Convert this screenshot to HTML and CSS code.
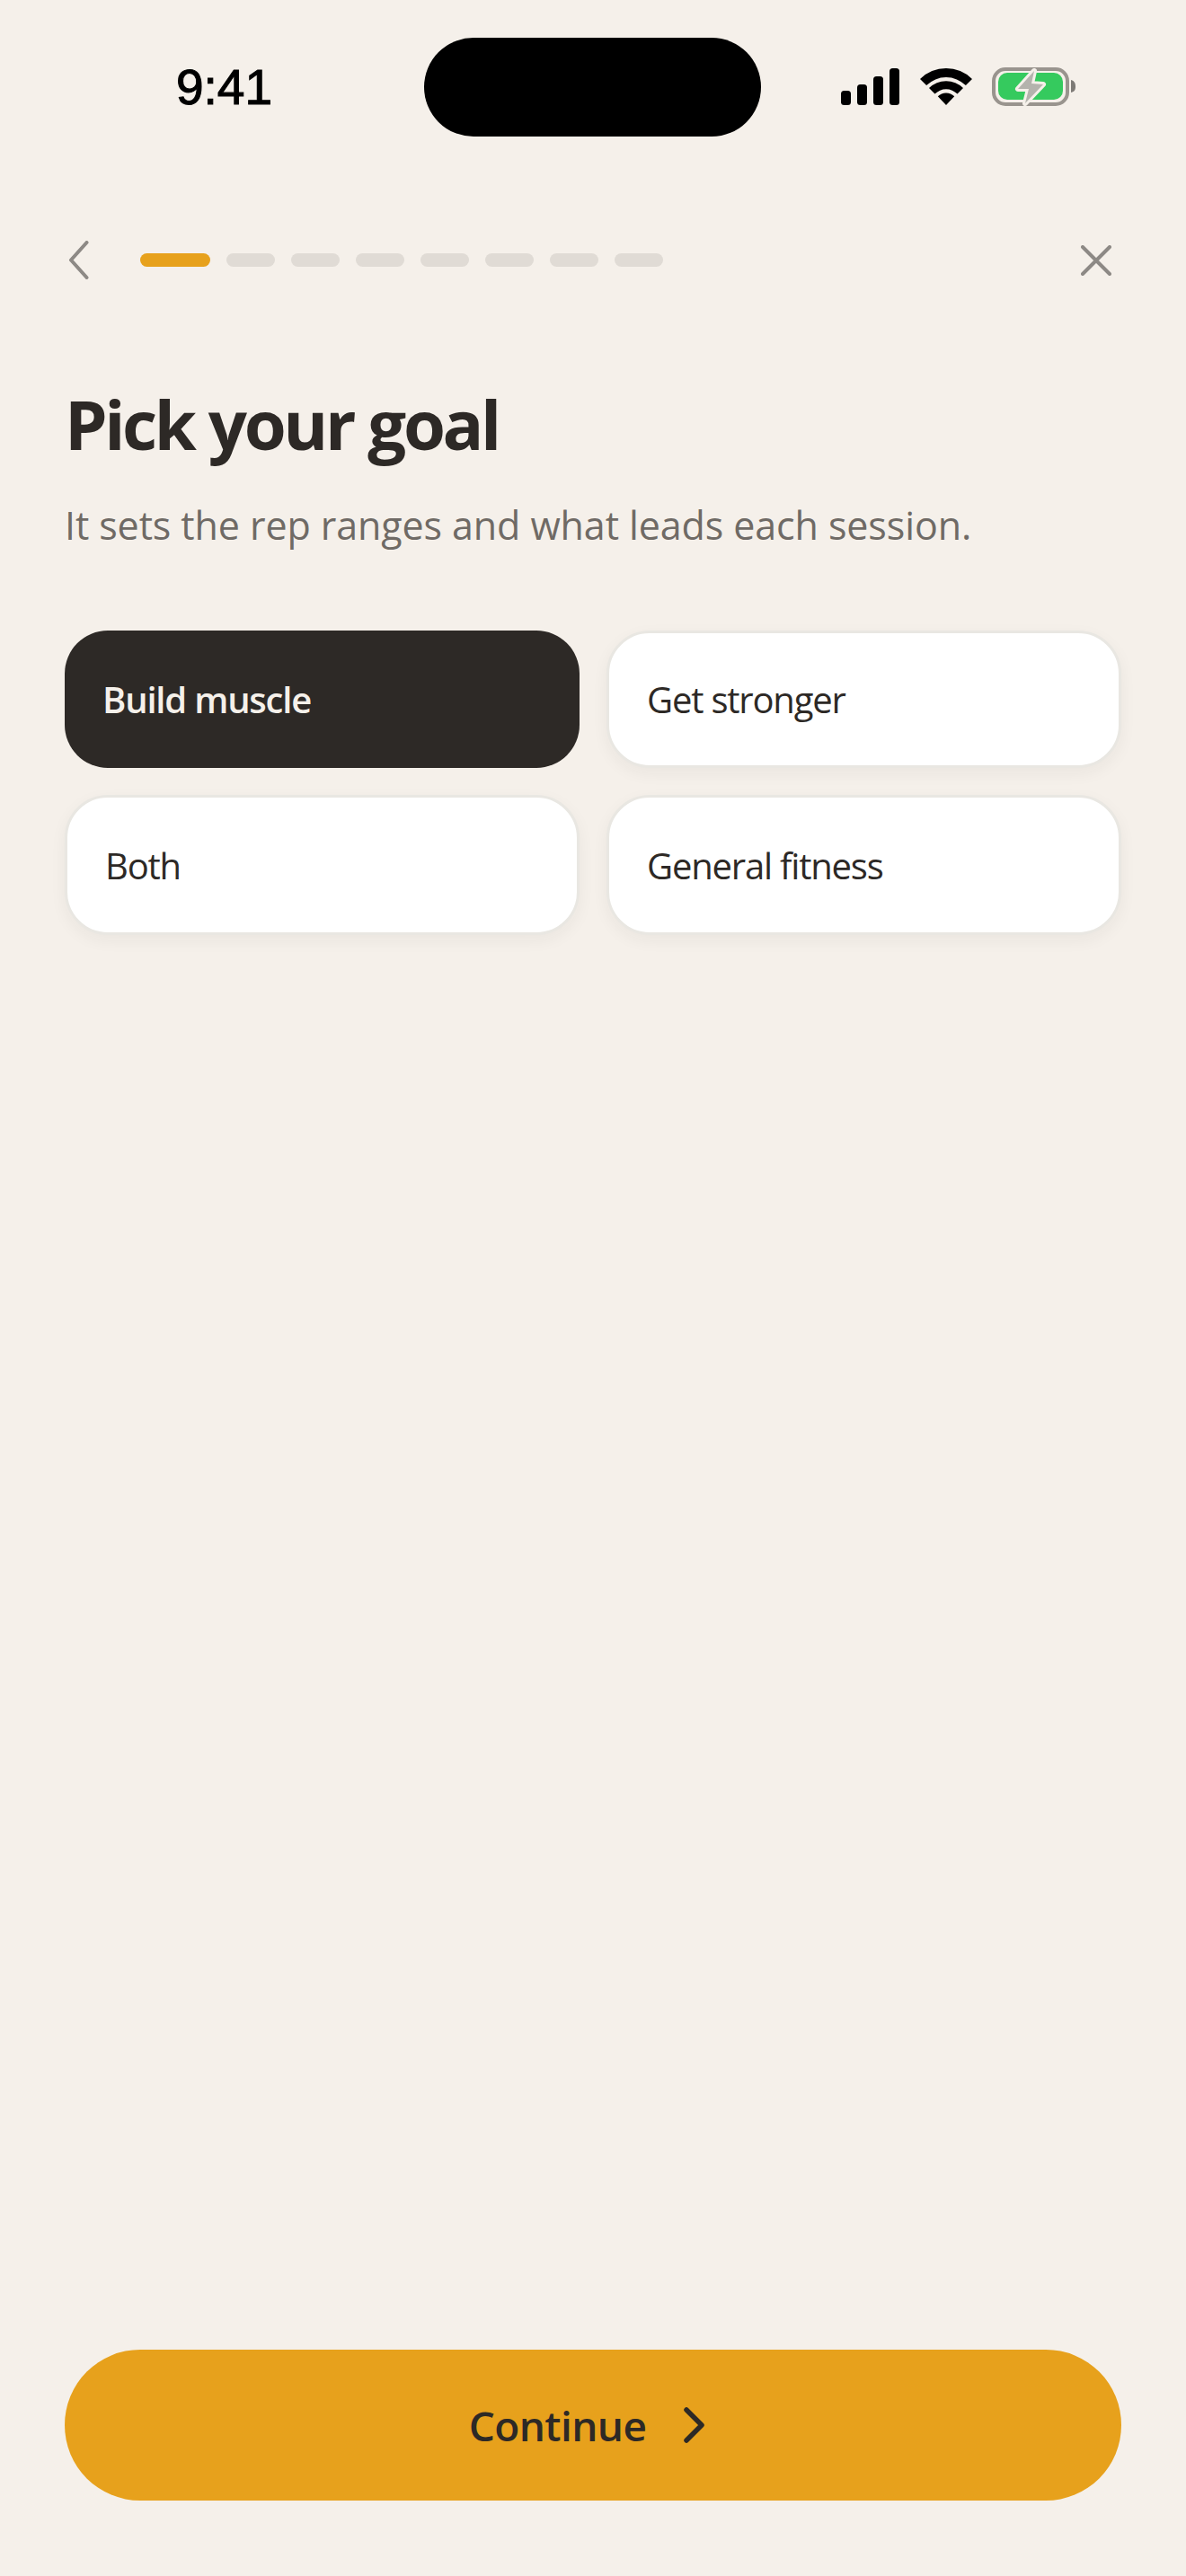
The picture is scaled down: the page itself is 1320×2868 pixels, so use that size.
FILE: index.html
```html
<!DOCTYPE html>
<html lang="en">
<head>
<meta charset="utf-8">
<title>Pick your goal</title>
<link rel="stylesheet" href="styles.css">
</head>
<body>
<main class="screen">
  <header class="status">
    <span class="time">9:41</span>
    <div class="island"></div>
    <div class="sys">
      <svg class="signal" width="66" height="42" viewBox="0 0 66 42"><rect x="0" y="25" width="11" height="16" rx="3.5"/><rect x="18" y="18" width="11" height="23" rx="3.5"/><rect x="36" y="9" width="11" height="32" rx="3.5"/><rect x="54" y="0" width="11" height="41" rx="3.5"/></svg>
      <svg class="wifi" width="58" height="42" viewBox="0 0 58 42"><path d="M0 13 A41 41 0 0 1 58 13 L50.9 20.1 A31 31 0 0 0 7.1 20.1Z"/><path d="M10 23 A27 27 0 0 1 48 23 L41.5 29.5 A17.7 17.7 0 0 0 16.5 29.5Z"/><path d="M19.8 32.2 A13 13 0 0 1 38.2 32.2 L29 42Z"/></svg>
      <svg class="battery" width="94" height="44" viewBox="0 0 94 44"><rect x="2" y="2" width="82" height="39" rx="13" fill="none" stroke="#99948e" stroke-width="4"/><rect x="7" y="6" width="72" height="30" rx="10" fill="#35ca5e"/><path d="M88 14 C92 15 93 18 93 21.5 C93 25 92 27 88 28Z" fill="#7d7a76"/><path d="M47 4 L29 24 L41 24 L37 40 L57 19 L44 18Z" fill="#b4b3ad" stroke="#f5f0ea" stroke-width="6" stroke-linejoin="round" paint-order="stroke"/></svg>
    </div>
  </header>

  <nav class="nav">
    <svg class="back" width="24" height="43" viewBox="0 0 24 43"><path d="M20.5 2 L3 21.5 L20.5 41" fill="none" stroke="#8d8985" stroke-width="4" stroke-linecap="round" stroke-linejoin="round"/></svg>
    <div class="progress">
      <span class="step step-active"></span>
      <span class="step"></span><span class="step"></span><span class="step"></span><span class="step"></span><span class="step"></span><span class="step"></span><span class="step"></span>
    </div>
    <svg class="close" width="34" height="34" viewBox="0 0 34 34"><path d="M2 2 L32 32 M32 2 L2 32" fill="none" stroke="#8d8985" stroke-width="4" stroke-linecap="round"/></svg>
  </nav>

  <section class="intro">
    <h1 class="title">Pick your goal</h1>
    <p class="sub">It sets the rep ranges and what leads each session.</p>
  </section>

  <section class="options">
    <div class="opt opt-on">Build muscle</div>
    <div class="opt">Get stronger</div>
    <div class="opt">Both</div>
    <div class="opt">General fitness</div>
  </section>

  <button class="cta" type="button">
    <span>Continue</span>
    <svg class="cta-icon" width="52" height="52" viewBox="0 0 52 52"><path d="M19 9 L36 26 L19 43" transform="translate(-1 0)" fill="none" stroke="#2d2926" stroke-width="5.5" stroke-linecap="round" stroke-linejoin="round"/></svg>
  </button>
</main>
</body>
</html>
```
FILE: styles.css
```css
* { box-sizing: border-box; }
html, body { margin: 0; padding: 0; }
body { background: #f5f0ea; color: #2d2926; font-family: "Open Sans", "Noto Sans", sans-serif; }
.screen { width: 1320px; height: 2868px; display: flex; flex-direction: column; padding: 42px 72px 84px; }

.status { display: flex; align-items: center; height: 110px; margin: 0 50px 0 124px; }
.time { width: 104px; font-family: "Liberation Sans", sans-serif; font-size: 55px; line-height: 72px; color: #000; font-weight: 400; white-space: nowrap; -webkit-text-stroke: 1.1px #000; }
.island { width: 376px; height: 110px; border-radius: 55px; background: #000; margin-left: 172px; }
.sys { display: flex; align-items: flex-start; margin-left: 89px; }
.signal { display: block; margin-top: 1px; }
.wifi { display: block; margin-left: 22px; }
.battery { display: block; margin-left: 22px; }

.nav { display: flex; align-items: center; height: 43px; margin-top: 116px; padding-left: 4px; padding-right: 11px; }
.progress { display: flex; gap: 18px; margin-left: 56px; }
.step { display: block; width: 54px; height: 15px; border-radius: 8px; background: #e0dbd5; }
.step-active { width: 78px; background: #e7a11c; }
.close { margin-left: auto; }

.intro { margin-top: 111px; }
.title { margin: 0; font-size: 76px; line-height: 100px; font-weight: 700; letter-spacing: -3.4px; color: #2d2926; }
.sub { margin: 33px 0 0; font-size: 43px; line-height: 60px; font-weight: 400; letter-spacing: -0.1px; color: #6f6a65; }

.options { display: grid; grid-template-columns: 573px 573px; grid-template-rows: 153px 156px; gap: 30px; margin-top: 87px; }
.opt { display: flex; align-items: center; padding-left: 42px; background: #fff; border: 3px solid #e9e7e2; border-radius: 48px; box-shadow: 0 6px 18px rgba(45, 41, 38, 0.05); font-size: 40px; font-weight: 500; letter-spacing: -1.2px; color: #2d2926; }
.opt-on { background: #2d2926; border: 0; padding-left: 42px; box-shadow: none; color: #f5f0ea; font-weight: 600; }

.cta { margin-top: auto; height: 168px; border: 0; border-radius: 84px; background: #e7a11c; display: flex; align-items: center; justify-content: center; gap: 27px; font-family: inherit; font-size: 46px; font-weight: 600; letter-spacing: -0.6px; color: #2d2926; }
.cta-icon { display: block; }
```
